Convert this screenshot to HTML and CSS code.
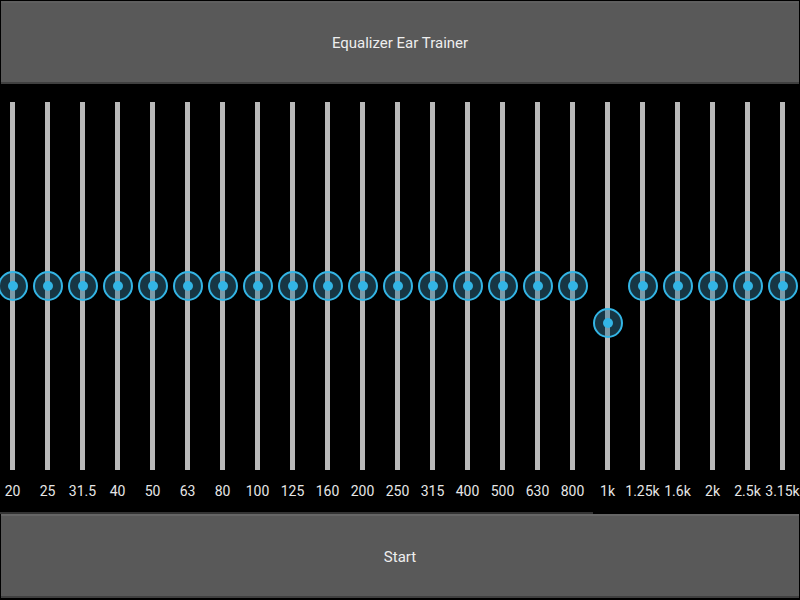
FILE: index.html
```html
<!DOCTYPE html>
<html>
<head>
<meta charset="utf-8">
<link rel="stylesheet" href="styles.css">
</head>
<body>
<div class="app">
  <div class="btn btn-top">Equalizer Ear Trainer</div>
  <div class="eq">
    <div class="band"><div class="track"><div class="thumb" style="top:50%"></div></div><div class="label">20</div></div>
    <div class="band"><div class="track"><div class="thumb" style="top:50%"></div></div><div class="label">25</div></div>
    <div class="band"><div class="track"><div class="thumb" style="top:50%"></div></div><div class="label">31.5</div></div>
    <div class="band"><div class="track"><div class="thumb" style="top:50%"></div></div><div class="label">40</div></div>
    <div class="band"><div class="track"><div class="thumb" style="top:50%"></div></div><div class="label">50</div></div>
    <div class="band"><div class="track"><div class="thumb" style="top:50%"></div></div><div class="label">63</div></div>
    <div class="band"><div class="track"><div class="thumb" style="top:50%"></div></div><div class="label">80</div></div>
    <div class="band"><div class="track"><div class="thumb" style="top:50%"></div></div><div class="label">100</div></div>
    <div class="band"><div class="track"><div class="thumb" style="top:50%"></div></div><div class="label">125</div></div>
    <div class="band"><div class="track"><div class="thumb" style="top:50%"></div></div><div class="label">160</div></div>
    <div class="band"><div class="track"><div class="thumb" style="top:50%"></div></div><div class="label">200</div></div>
    <div class="band"><div class="track"><div class="thumb" style="top:50%"></div></div><div class="label">250</div></div>
    <div class="band"><div class="track"><div class="thumb" style="top:50%"></div></div><div class="label">315</div></div>
    <div class="band"><div class="track"><div class="thumb" style="top:50%"></div></div><div class="label">400</div></div>
    <div class="band"><div class="track"><div class="thumb" style="top:50%"></div></div><div class="label">500</div></div>
    <div class="band"><div class="track"><div class="thumb" style="top:50%"></div></div><div class="label">630</div></div>
    <div class="band"><div class="track"><div class="thumb" style="top:50%"></div></div><div class="label">800</div></div>
    <div class="band"><div class="track"><div class="thumb" style="top:60%"></div></div><div class="label">1k</div></div>
    <div class="band"><div class="track"><div class="thumb" style="top:50%"></div></div><div class="label">1.25k</div></div>
    <div class="band"><div class="track"><div class="thumb" style="top:50%"></div></div><div class="label">1.6k</div></div>
    <div class="band"><div class="track"><div class="thumb" style="top:50%"></div></div><div class="label">2k</div></div>
    <div class="band"><div class="track"><div class="thumb" style="top:50%"></div></div><div class="label">2.5k</div></div>
    <div class="band"><div class="track"><div class="thumb" style="top:50%"></div></div><div class="label">3.15k</div></div>
  </div>
  <div class="progress"><div class="progress-fill" style="width:593px"></div></div>
  <div class="btn btn-bottom">Start</div>
</div>
</body>
</html>
```

FILE: styles.css
```css
html, body {
  margin: 0;
  padding: 0;
  background: #000;
  width: 800px;
  height: 600px;
  overflow: hidden;
}

.app {
  display: flex;
  flex-direction: column;
  width: 800px;
  height: 600px;
  font-family: Roboto, "Noto Sans", sans-serif;
}

.btn {
  margin: 0 1px;
  background: #595959;
  color: #eeeeee;
  font-size: 15px;
  display: flex;
  align-items: center;
  justify-content: center;
  box-sizing: border-box;
  border-top: 2px solid #666666;
  border-bottom: 2px solid #404040;
  padding-top: 1px;
}

.btn-top {
  margin-top: 1px;
  height: 83px;
  border-top-color: #5f5f5f;
}

.eq {
  display: grid;
  grid-template-columns: repeat(23, 35px);
  margin-left: -5px;
  margin-top: 18px;
}

.band {
  display: flex;
  flex-direction: column;
  align-items: center;
}

.track {
  position: relative;
  width: 5px;
  height: 368px;
  background: #b9b9b9;
}

.thumb {
  position: absolute;
  left: 50%;
  width: 30px;
  height: 30px;
  margin-left: -15px;
  margin-top: -15px;
  box-sizing: border-box;
  border-radius: 50%;
  border: 2px solid #33b5e5;
  background: rgba(51, 120, 150, 0.45);
  display: flex;
  align-items: center;
  justify-content: center;
}

.thumb::after {
  content: "";
  width: 10px;
  height: 10px;
  border-radius: 50%;
  background: #33b5e5;
}

.label {
  margin-top: 13px;
  font-size: 14px;
  line-height: 16px;
  color: #e6e6e6;
  white-space: nowrap;
}

.progress {
  margin-top: 13px;
  height: 2px;
  background: #000;
}

.progress-fill {
  height: 2px;
  background: #333333;
}

.btn-bottom {
  height: 84px;
}
```
